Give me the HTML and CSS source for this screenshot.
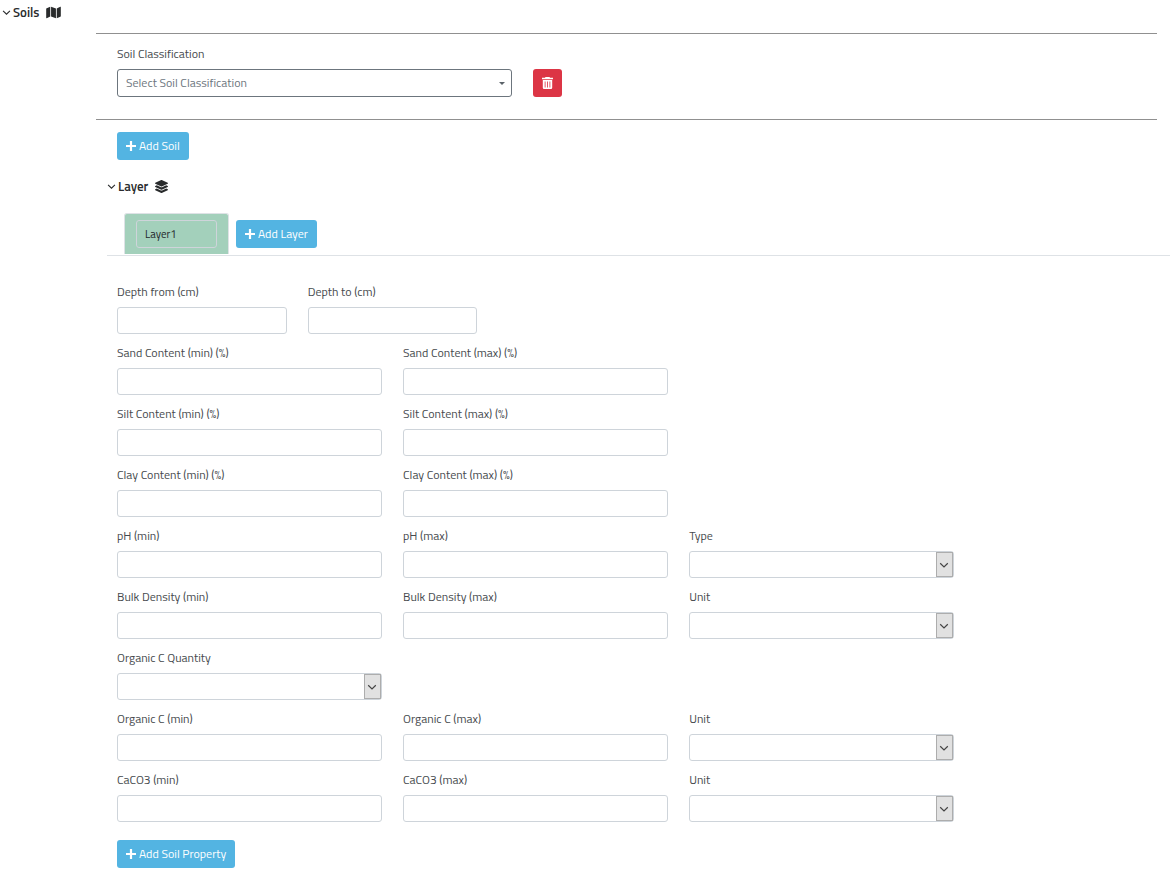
FILE: index.html
```html
<!DOCTYPE html>
<html lang="en">
<head>
<meta charset="utf-8">
<title>Soils</title>
<link rel="stylesheet" href="styles.css">
</head>
<body>
<svg class="sprite" aria-hidden="true">
  <symbol id="chevron" viewBox="0 0 10 10"><path d="M1.2 3.2 5 6.9 8.8 3.2" fill="none" stroke="currentColor" stroke-width="1.2"/></symbol>
  <symbol id="plus" viewBox="0 0 10 10"><path d="M3.900 0h2.200v3.900H10v2.200H6.100V10H3.900V6.100H0V3.900h3.900z" fill="currentColor"/></symbol>
</svg>
<main class="page">
  <button class="toggle" type="button" aria-expanded="true">
    <svg class="toggle-chevron"><use href="#chevron"/></svg>
    <span>Soils</span>
    <svg class="toggle-icon map" viewBox="0 0 576 512" fill="currentColor"><path d="M0 117.660v346.320c0 11.320 11.430 19.060 21.940 14.860L160 416V32L20.120 87.950A32.006 32.006 0 0 0 0 117.660zM192 416l192 64V96L192 32v384zM554.060 33.160L416 96v384l139.880-55.950A31.996 31.996 0 0 0 576 394.340V48.020c0-11.320-11.430-19.060-21.940-14.860z"/></svg>
  </button>
  <section class="soils">
    <div class="soil-row">
      <div class="field">
        <label for="classification">Soil Classification</label>
        <div class="select">
          <select id="classification" class="control classification"><option>Select Soil Classification</option></select>
          <span class="caret"></span>
        </div>
      </div>
      <button class="btn btn-danger" type="button" aria-label="Delete soil">
        <svg class="trash" viewBox="0 0 11 12" fill="currentColor"><path fill-rule="evenodd" d="M3.500 0h4l.5.8h3v1.400H0V.8h3zM.8 3h9.400v7.800q0 1.200-1.200 1.200H2Q.8 12 .8 10.800zM2.700 4.400v6h.8v-6zm2.400 0v6h.8v-6zm2.400 0v6h.8v-6z"/></svg>
      </button>
    </div>
    <div class="soil-content">
      <button class="btn btn-info" type="button"><svg class="plus"><use href="#plus"/></svg>Add Soil</button>
    </div>
  </section>
  <section class="layers">
    <button class="toggle" type="button" aria-expanded="true">
      <svg class="toggle-chevron"><use href="#chevron"/></svg>
      <span>Layer</span>
      <svg class="toggle-icon stack" viewBox="0 0 512 512" fill="currentColor"><path d="M12.410 148.020l232.940 105.670c6.800 3.090 14.490 3.090 21.290 0l232.940-105.670c16.550-7.510 16.550-32.520 0-40.030L266.650 2.310a25.607 25.607 0 0 0-21.290 0L12.410 107.980c-16.550 7.510-16.550 32.530 0 40.040zm487.180 88.280l-58.090-26.330-161.640 73.270c-7.560 3.430-15.590 5.170-23.860 5.170s-16.290-1.740-23.860-5.170L70.510 209.970l-58.100 26.330c-16.550 7.500-16.550 32.500 0 40l232.940 105.590c6.800 3.080 14.490 3.080 21.290 0L499.590 276.300c16.550-7.500 16.550-32.500 0-40zm0 127.800l-57.870-26.230-161.860 73.370c-7.560 3.430-15.590 5.170-23.860 5.170s-16.290-1.740-23.860-5.170L70.290 337.870 12.410 364.100c-16.550 7.500-16.550 32.500 0 40l232.940 105.590c6.800 3.080 14.490 3.080 21.290 0L499.590 404.100c16.550-7.500 16.550-32.500 0-40z"/></svg>
    </button>
    <div class="tabs">
      <div class="tab"><input class="tab-name" type="text" value="Layer1" aria-label="Layer name"></div>
      <button class="btn btn-info" type="button"><svg class="plus"><use href="#plus"/></svg>Add Layer</button>
    </div>
    <form class="layer-form">
      <div class="row">
        <div class="field narrow"><label for="depth-from">Depth from (cm)</label><input class="control" type="text" id="depth-from"></div>
        <div class="field narrow"><label for="depth-to">Depth to (cm)</label><input class="control" type="text" id="depth-to"></div>
      </div>
      <div class="row">
        <div class="field"><label for="sand-min">Sand Content (min) (%)</label><input class="control" type="text" id="sand-min"></div>
        <div class="field"><label for="sand-max">Sand Content (max) (%)</label><input class="control" type="text" id="sand-max"></div>
      </div>
      <div class="row">
        <div class="field"><label for="silt-min">Silt Content (min) (%)</label><input class="control" type="text" id="silt-min"></div>
        <div class="field"><label for="silt-max">Silt Content (max) (%)</label><input class="control" type="text" id="silt-max"></div>
      </div>
      <div class="row">
        <div class="field"><label for="clay-min">Clay Content (min) (%)</label><input class="control" type="text" id="clay-min"></div>
        <div class="field"><label for="clay-max">Clay Content (max) (%)</label><input class="control" type="text" id="clay-max"></div>
      </div>
      <div class="row">
        <div class="field"><label for="ph-min">pH (min)</label><input class="control" type="text" id="ph-min"></div>
        <div class="field"><label for="ph-max">pH (max)</label><input class="control" type="text" id="ph-max"></div>
        <div class="field"><label for="ph-type">Type</label><div class="select"><select class="control" id="ph-type"><option></option></select><span class="drop"><svg><use href="#chevron"/></svg></span></div></div>
      </div>
      <div class="row">
        <div class="field"><label for="bulk-min">Bulk Density (min)</label><input class="control" type="text" id="bulk-min"></div>
        <div class="field"><label for="bulk-max">Bulk Density (max)</label><input class="control" type="text" id="bulk-max"></div>
        <div class="field"><label for="bulk-unit">Unit</label><div class="select"><select class="control" id="bulk-unit"><option></option></select><span class="drop"><svg><use href="#chevron"/></svg></span></div></div>
      </div>
      <div class="row">
        <div class="field"><label for="organic-quantity">Organic C Quantity</label><div class="select"><select class="control" id="organic-quantity"><option></option></select><span class="drop"><svg><use href="#chevron"/></svg></span></div></div>
      </div>
      <div class="row">
        <div class="field"><label for="organic-min">Organic C (min)</label><input class="control" type="text" id="organic-min"></div>
        <div class="field"><label for="organic-max">Organic C (max)</label><input class="control" type="text" id="organic-max"></div>
        <div class="field"><label for="organic-unit">Unit</label><div class="select"><select class="control" id="organic-unit"><option></option></select><span class="drop"><svg><use href="#chevron"/></svg></span></div></div>
      </div>
      <div class="row">
        <div class="field"><label for="caco3-min">CaCO3 (min)</label><input class="control" type="text" id="caco3-min"></div>
        <div class="field"><label for="caco3-max">CaCO3 (max)</label><input class="control" type="text" id="caco3-max"></div>
        <div class="field"><label for="caco3-unit">Unit</label><div class="select"><select class="control" id="caco3-unit"><option></option></select><span class="drop"><svg><use href="#chevron"/></svg></span></div></div>
      </div>
      <div class="form-actions">
        <button class="btn btn-info" type="button"><svg class="plus"><use href="#plus"/></svg>Add Soil Property</button>
      </div>
    </form>
  </section>
</main>
</body>
</html>
```

FILE: styles.css
```css
* { box-sizing: border-box; }

body {
  margin: 0;
  background: #fff;
  color: #464a4e;
  font-family: "Titillium Web", Lato, "Open Sans", sans-serif;
  font-size: 12px;
  line-height: 18px;
}

button, input, select { font: inherit; }

.sprite { position: absolute; width: 0; height: 0; }

.page { padding-top: 3px; }

.toggle {
  display: flex;
  align-items: center;
  padding: 0;
  border: 0;
  background: none;
  color: #292b2c;
  font-size: 13px;
  font-weight: 600;
  cursor: pointer;
}
.page > .toggle { margin-left: 2px; }
.toggle-chevron { width: 9px; height: 9px; margin-right: 2px; }
.toggle-icon { margin-left: 7px; }
.map { width: 15px; height: 13px; }
.stack { width: 13px; height: 13px; }

.soils { margin: 12px 13px 0 96px; }

.soil-row {
  display: grid;
  grid-template-columns: minmax(0, 19fr) minmax(0, 29fr);
  column-gap: 21px;
  align-items: end;
  padding: 11px 21px 22px;
  border-top: 1px solid #909090;
  border-bottom: 1px solid #909090;
}

.soil-content { padding: 12px 21px 0; }

.field { display: grid; gap: 6px; grid-column: span 3; }
.narrow { grid-column: span 2; }
.soil-row .field { grid-column: auto; }

.control {
  display: block;
  width: 100%;
  height: 27px;
  padding: 0 8px;
  border: 1px solid #ced4da;
  border-radius: 3px;
  background: #fff;
  color: #495057;
}

.select { position: relative; }
.select .control { appearance: none; }
.select .classification {
  height: 28px;
  border-color: #6c757d;
  color: #6c757d;
}

.caret {
  position: absolute;
  top: 13px;
  right: 7px;
  border: 3px solid transparent;
  border-top-color: #5a6268;
  border-bottom: 0;
  pointer-events: none;
}

.drop {
  position: absolute;
  top: 1px;
  right: 1px;
  bottom: 1px;
  display: flex;
  align-items: center;
  justify-content: center;
  width: 17px;
  padding-right: 1px;
  border: 1px solid #adadad;
  background: #e1e1e1;
  color: #444;
  pointer-events: none;
}
.drop svg { width: 10px; height: 10px; }

.btn {
  display: inline-flex;
  align-items: center;
  gap: 3px;
  height: 28px;
  padding: 0 9px;
  border: 0;
  border-radius: 3px;
  color: #fff;
  cursor: pointer;
}
.btn-info { background: #53b4e2; }
.btn-danger { justify-self: start; background: #dc3545; }
.plus { width: 10px; height: 10px; }
.trash { width: 11px; height: 12px; }

.layers { margin: 17px 0 0 107px; }

.tabs {
  display: flex;
  align-items: center;
  gap: 7px;
  margin-top: 18px;
  padding: 0 0 1px 17px;
  border-bottom: 1px solid #dee2e6;
}
.tab {
  padding: 6px 11px;
  border: 1px solid #dee2e6;
  border-bottom: 0;
  border-radius: 3px 3px 0 0;
  background: #a3d0bb;
}
.tab-name {
  display: block;
  width: 81px;
  height: 28px;
  padding: 0 8px;
  border: 1px solid #ced4da;
  border-radius: 3px;
  background: transparent;
  color: #212529;
  font-size: 11px;
}

.layer-form { display: grid; gap: 10px; padding: 27px 25px 15px 10px; }

.row {
  display: grid;
  grid-template-columns: repeat(11, minmax(0, 1fr));
  column-gap: 21px;
}

.form-actions { padding-top: 8px; }
```
